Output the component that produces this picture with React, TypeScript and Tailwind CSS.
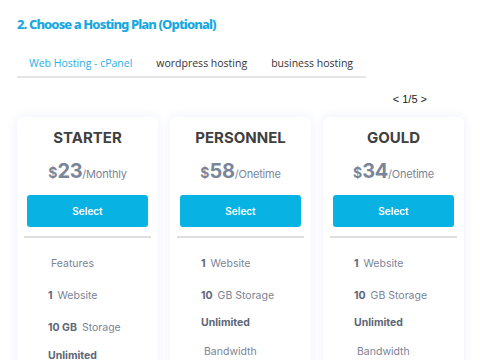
import React from 'react';

type Feature = { bold?: string; label?: string; indent?: boolean; gap: number };

interface Plan {
    name: string;
    price: string;
    period: string;
    features: Feature[];
}

const plans: Plan[] = [
    {
        name: 'STARTER',
        price: '23',
        period: '/Monthly',
        features: [
            { label: 'Features', indent: true, gap: 18 },
            { bold: '1', label: 'Website', gap: 16 },
            { bold: '10 GB', label: 'Storage', gap: 16 },
            { bold: 'Unlimited', gap: 12 },
        ],
    },
    {
        name: 'PERSONNEL',
        price: '58',
        period: '/Onetime',
        features: [
            { bold: '1', label: 'Website', gap: 18 },
            { bold: '10', label: 'GB Storage', gap: 16 },
            { bold: 'Unlimited', gap: 11 },
            { label: 'Bandwidth', indent: true, gap: 13 },
        ],
    },
    {
        name: 'GOULD',
        price: '34',
        period: '/Onetime',
        features: [
            { bold: '1', label: 'Website', gap: 18 },
            { bold: '10', label: 'GB Storage', gap: 16 },
            { bold: 'Unlimited', gap: 11 },
            { label: 'Bandwidth', indent: true, gap: 13 },
        ],
    },
];

const tabs = ['Web Hosting - cPanel', 'wordpress hosting', 'business hosting'];

function PlanCard({ plan }: { plan: Plan }) {
    return (
        <div className="w-[141px] shrink-0 h-[260px] bg-white rounded-md shadow-[0_0_10px_rgba(110,130,210,0.13)] px-[10px] pt-[11px] font-['Inter',sans-serif]">
            <h3 className="text-center text-[15px] leading-[20px] font-bold text-[#404040]">
                {plan.name}
            </h3>
            <div className="mt-[9px] h-[28px] flex items-baseline justify-center text-[#7b8599]">
                <span className="text-[14px] font-bold">$</span>
                <span className="text-[20px] font-bold leading-[28px] tracking-[-0.3px]">{plan.price}</span>
                <span className="text-[11px] tracking-[-0.2px]">{plan.period}</span>
            </div>
            <button className="mt-[10px] w-full h-[32px] rounded-[3px] bg-[#08b2e3] text-white text-[10px] font-semibold">
                Select
            </button>
            <div className="mt-[9px] -mx-[3px] h-[2px] bg-[#dedede]" />
            <ul className="pl-[21px] text-[10.5px] leading-[16px]">
                {plan.features.map((f, i) => (
                    <li
                        key={i}
                        className={`flex gap-[5px] ${f.indent ? 'pl-[3px]' : ''}`}
                        style={{ marginTop: f.gap }}
                    >
                        {f.bold && <span className="font-bold text-[#5d6678]">{f.bold}</span>}
                        {f.label && <span className="text-[#7b8496]">{f.label}</span>}
                    </li>
                ))}
            </ul>
        </div>
    );
}

export default function App() {
    return (
        <div className="w-[480px] h-[360px] overflow-hidden bg-white pl-[17px]">
            <h2 className="pt-[14px] text-[13px] leading-[20px] font-extrabold tracking-[-0.9px] text-[#17a8e0] font-['Noto_Sans',sans-serif]">
                2. Choose a Hosting Plan (Optional)
            </h2>
            <div className="mt-[15px] w-[349px] flex border-b-2 border-[#e6e6e6] font-['Open_Sans',sans-serif] text-[10.5px] leading-[16px]">
                {tabs.map((t, i) => (
                    <div
                        key={t}
                        className={`shrink-0 whitespace-nowrap px-[12px] pt-[6px] pb-[5px] ${i === 0 ? 'text-[#2aaee5]' : 'text-[#333]'}`}
                    >
                        {t}
                    </div>
                ))}
            </div>
            <div className="w-[410px] mt-[14px] text-right text-[11px] leading-[14px] text-[#222] font-['Liberation_Sans',sans-serif]">
                &lt; 1/5 &gt;
            </div>
            <div className="mt-[11px] flex gap-[12px]">
                {plans.map((p) => (
                    <PlanCard key={p.name} plan={p} />
                ))}
            </div>
        </div>
    );
}
